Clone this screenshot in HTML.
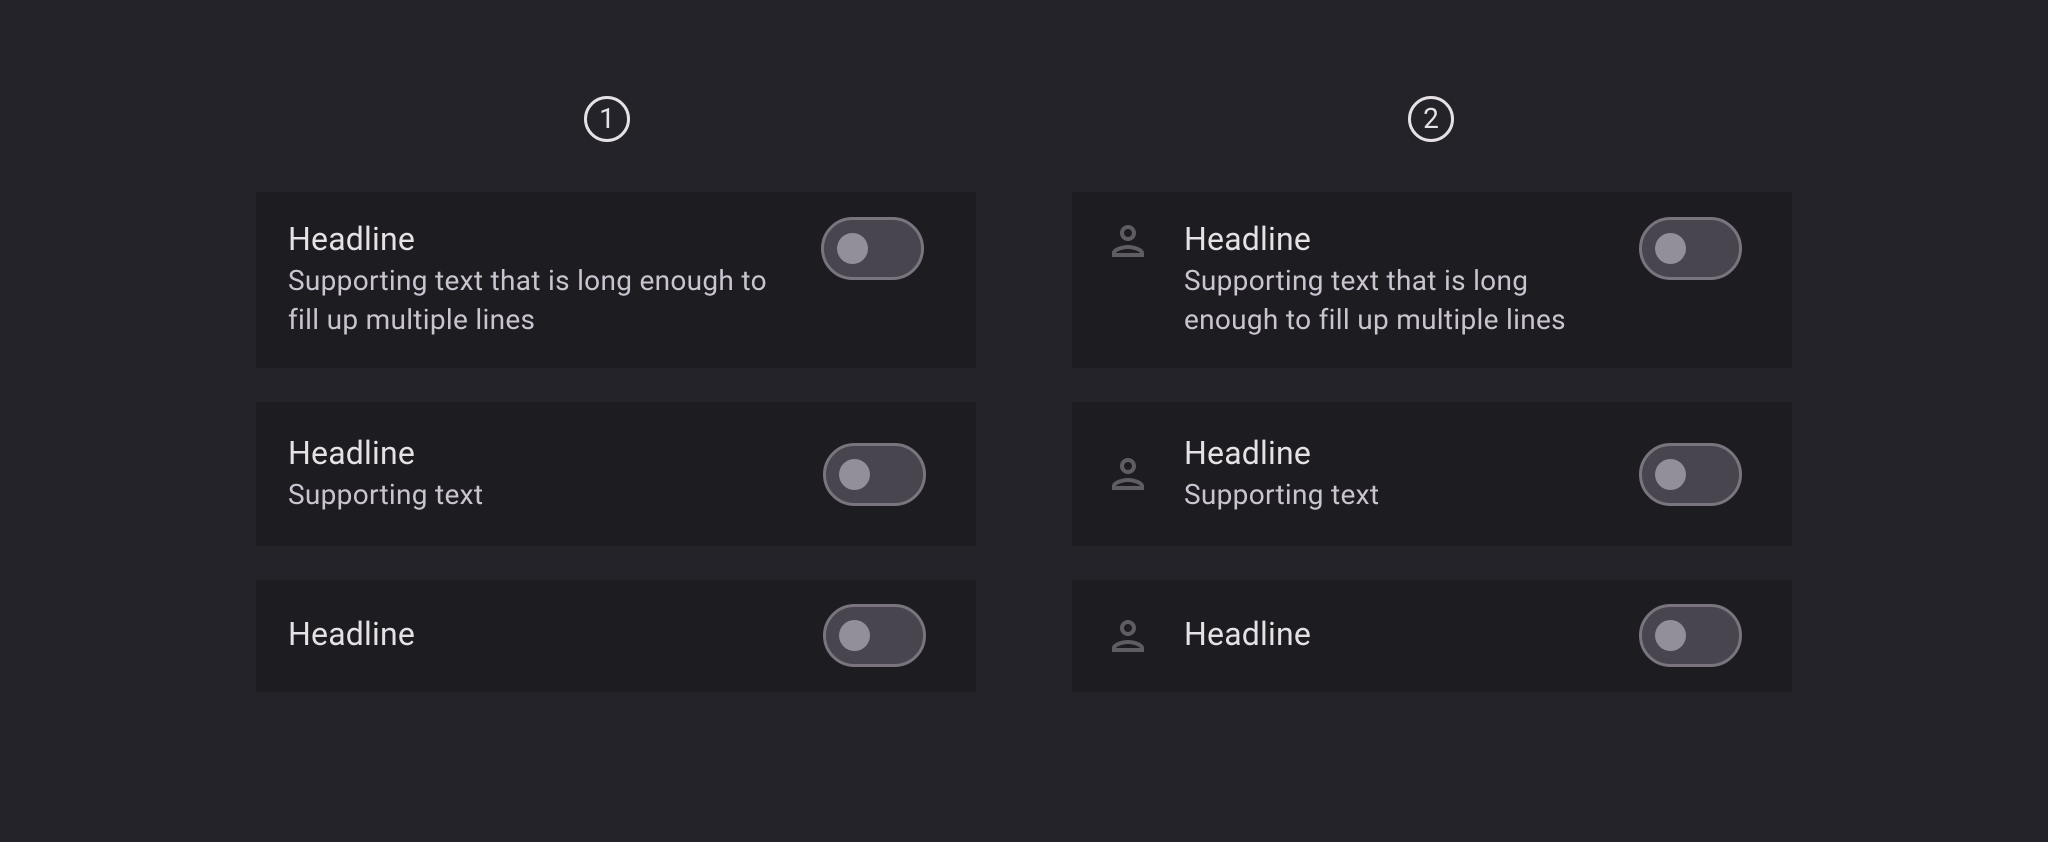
<!DOCTYPE html>
<html><head><meta charset="utf-8"><style>
*{margin:0;padding:0;box-sizing:border-box}
body{width:2048px;height:842px;background:#24232a;position:relative;overflow:hidden;font-family:"Roboto","Liberation Sans",sans-serif}
.card{position:absolute;background:#1d1c21}
.h{position:absolute;color:#e6e1e5;font-size:32px;line-height:32px;white-space:nowrap;letter-spacing:0.2px}
.s{position:absolute;color:#cac4d0;font-size:28px;line-height:39px;white-space:nowrap;letter-spacing:0.3px}
.tg{position:absolute;width:103px;height:63px;border:3px solid #79747e;background:#48454e;border-radius:32px}
.tg::after{content:"";position:absolute;left:13px;top:13px;width:31px;height:31px;border-radius:50%;background:#938f99}
.num{position:absolute;width:46px;height:46px;border:3px solid #e6e1e5;border-radius:50%;color:#e6e1e5;font-size:28px;line-height:40px;text-align:center}
svg.ic{position:absolute;width:48px;height:48px}
</style></head><body>
<div class="num" style="left:584px;top:96px">1</div>
<div class="num" style="left:1408px;top:96px">2</div>

<div class="card" style="left:256px;top:192px;width:720px;height:176px"></div>
<div class="card" style="left:256px;top:402px;width:720px;height:144px"></div>
<div class="card" style="left:256px;top:580px;width:720px;height:112px"></div>
<div class="card" style="left:1072px;top:192px;width:720px;height:176px"></div>
<div class="card" style="left:1072px;top:402px;width:720px;height:144px"></div>
<div class="card" style="left:1072px;top:580px;width:720px;height:112px"></div>

<div class="h" style="left:288px;top:223px">Headline</div>
<div class="s" style="left:288px;top:261px">Supporting text that is long enough to<br>fill up multiple lines</div>
<div class="h" style="left:288px;top:437px">Headline</div>
<div class="s" style="left:288px;top:475px">Supporting text</div>
<div class="h" style="left:288px;top:618px">Headline</div>

<div class="h" style="left:1184px;top:223px">Headline</div>
<div class="s" style="left:1184px;top:261px">Supporting text that is long<br>enough to fill up multiple lines</div>
<div class="h" style="left:1184px;top:437px">Headline</div>
<div class="s" style="left:1184px;top:475px">Supporting text</div>
<div class="h" style="left:1184px;top:618px">Headline</div>

<div class="tg" style="left:821px;top:217px"></div>
<div class="tg" style="left:823px;top:443px"></div>
<div class="tg" style="left:823px;top:604px"></div>
<div class="tg" style="left:1639px;top:217px"></div>
<div class="tg" style="left:1639px;top:443px"></div>
<div class="tg" style="left:1639px;top:604px"></div>

<svg class="ic" viewBox="0 0 24 24" style="left:1104px;top:217px"><path fill="#5f5c64" d="M12 6c1.1 0 2 .9 2 2s-.9 2-2 2-2-.9-2-2 .9-2 2-2m0 10c2.7 0 5.8 1.290 6 2H6c.23-.72 3.31-2 6-2m0-12C9.790 4 8 5.79 8 8s1.79 4 4 4 4-1.79 4-4-1.79-4-4-4zm0 10c-2.67 0-8 1.34-8 4v2h16v-2c0-2.66-5.33-4-8-4z"/></svg>
<svg class="ic" viewBox="0 0 24 24" style="left:1104px;top:450px"><path fill="#5f5c64" d="M12 6c1.1 0 2 .9 2 2s-.9 2-2 2-2-.9-2-2 .9-2 2-2m0 10c2.7 0 5.8 1.290 6 2H6c.23-.72 3.31-2 6-2m0-12C9.790 4 8 5.79 8 8s1.79 4 4 4 4-1.79 4-4-1.79-4-4-4zm0 10c-2.67 0-8 1.34-8 4v2h16v-2c0-2.66-5.33-4-8-4z"/></svg>
<svg class="ic" viewBox="0 0 24 24" style="left:1104px;top:612px"><path fill="#5f5c64" d="M12 6c1.1 0 2 .9 2 2s-.9 2-2 2-2-.9-2-2 .9-2 2-2m0 10c2.7 0 5.8 1.290 6 2H6c.23-.72 3.31-2 6-2m0-12C9.790 4 8 5.79 8 8s1.79 4 4 4 4-1.79 4-4-1.79-4-4-4zm0 10c-2.67 0-8 1.34-8 4v2h16v-2c0-2.66-5.33-4-8-4z"/></svg>
</body></html>
